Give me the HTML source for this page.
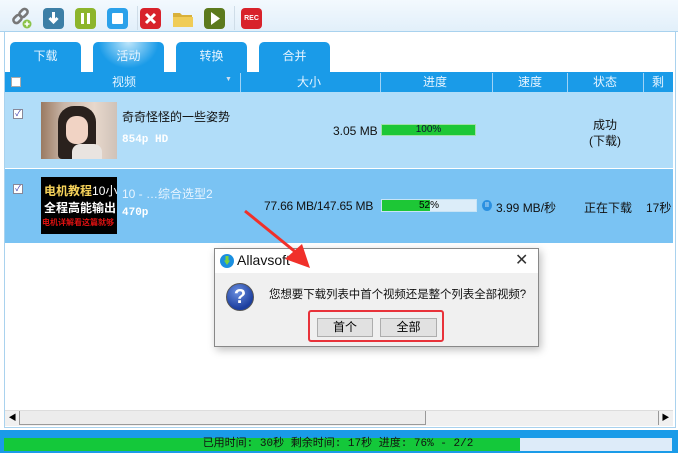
<!DOCTYPE html>
<html><head><meta charset="utf-8"><style>
*{margin:0;padding:0;box-sizing:border-box}
body{width:678px;height:453px;overflow:hidden;background:#fff;font-family:"Liberation Sans","Noto Sans CJK SC",sans-serif;position:relative}
.a{position:absolute;white-space:nowrap}
.ic{position:absolute;top:8px;width:21px;height:21px;border-radius:4px}
.tab{position:absolute;top:42px;height:31px;width:71px;background:#1a9be8;border-radius:5px 5px 0 0;color:#e6f4ff;font-size:12px;text-align:center;line-height:28px}
.hd{position:absolute;top:72px;height:20px;color:#e6f4ff;font-size:12px;line-height:20px;text-align:center}
.sep{position:absolute;top:73px;width:1px;height:19px;background:#9fd3f6}
.t{position:absolute;font-size:12px;color:#111;white-space:nowrap}
</style></head><body>
<div class="a" style="left:0;top:0;width:678px;height:32px;background:linear-gradient(#f3f9fe,#e1effa)"></div>
<div class="a" style="left:0;top:31px;width:678px;height:1px;background:#a9d2ee"></div>
<svg class="a" style="left:11px;top:7px" width="22" height="22" viewBox="0 0 22 22"><g fill="none" stroke="#777" stroke-width="2.6"><rect x="2" y="9" width="9" height="6" rx="3" transform="rotate(-45 6.5 12)"/><rect x="8" y="3" width="9" height="6" rx="3" transform="rotate(-45 12.5 6)"/></g><circle cx="16" cy="17" r="4.5" fill="#8bc34a"/><path d="M16 14.5v5M13.5 17h5" stroke="#fff" stroke-width="1.6"/></svg>
<div class="ic" style="left:43px;background:#3d7fa6"><svg width="21" height="21"><path d="M10.5 4v9M6.5 10l4 4 4-4" stroke="#fff" stroke-width="3" fill="none"/></svg></div>
<div class="ic" style="left:75px;background:#8db52c"><div class="a" style="left:6px;top:5px;width:3px;height:11px;background:#fff"></div><div class="a" style="left:12px;top:5px;width:3px;height:11px;background:#fff"></div></div>
<div class="ic" style="left:107px;background:#2ba1ea"><div class="a" style="left:5px;top:5px;width:11px;height:11px;background:#fff;border-radius:1px"></div></div>
<div class="a" style="left:137px;top:6px;width:1px;height:24px;background:#cfdde8"></div>
<div class="ic" style="left:140px;background:#d8222b"><svg width="21" height="21"><path d="M6 6l9 9M15 6l-9 9" stroke="#fff" stroke-width="3"/></svg></div>
<svg class="a" style="left:172px;top:10px" width="22" height="18"><path d="M1 3h7l2 2h10v12H1z" fill="#d9b13a"/><path d="M1 7h20v10H1z" fill="#f0cc56"/></svg>
<div class="ic" style="left:204px;background:#5c7a1e"><svg width="21" height="21"><path d="M7 4l9 6.5-9 6.5z" fill="#fff"/></svg></div>
<div class="a" style="left:234px;top:6px;width:1px;height:24px;background:#cfdde8"></div>
<div class="ic" style="left:241px;background:#d8222b;color:#fff;font-size:7px;line-height:21px;text-align:center;font-weight:bold">REC</div>
<div class="a" style="left:4px;top:32px;width:672px;height:396px;border:1px solid #a9d2ee;border-top:none"></div>
<div class="tab" style="left:10px">下载</div>
<div class="tab" style="left:93px;background:radial-gradient(ellipse at 50% 0,#bfe6fb 0,#1a9be8 60%)">活动</div>
<div class="tab" style="left:176px">转换</div>
<div class="tab" style="left:259px">合并</div>
<div class="a" style="left:5px;top:72px;width:668px;height:20px;background:#1a9be8"></div>
<div class="a" style="left:11px;top:77px;width:10px;height:10px;background:#fff;border:1px solid #aaa"></div>
<div class="hd" style="left:100px;width:48px">视频</div>
<div class="a" style="left:225px;top:76px;color:#cde;font-size:7px">▼</div>
<div class="sep" style="left:240px"></div>
<div class="hd" style="left:285px;width:48px">大小</div>
<div class="sep" style="left:380px"></div>
<div class="hd" style="left:411px;width:48px">进度</div>
<div class="sep" style="left:492px"></div>
<div class="hd" style="left:506px;width:48px">速度</div>
<div class="sep" style="left:567px"></div>
<div class="hd" style="left:581px;width:48px">状态</div>
<div class="sep" style="left:643px"></div>
<div class="hd" style="left:652px;width:20px;text-align:left;overflow:hidden">剩余</div>
<div class="a" style="left:5px;top:92px;width:668px;height:76px;background:#b1ddf9"></div>
<div class="a" style="left:13px;top:109px;width:10px;height:10px;background:#fff;border:1px solid #889;font-size:8px;line-height:8px;color:#33a;text-align:center">✓</div>
<div class="a" style="left:41px;top:102px;width:76px;height:57px;background:linear-gradient(90deg,#9a7a62,#c9b6a8 30%,#e8d8cc 70%,#cfc2b8)"></div>
<div class="a" style="left:58px;top:106px;width:38px;height:53px;border-radius:16px 16px 4px 4px;background:#2a211d"></div>
<div class="a" style="left:66px;top:116px;width:22px;height:28px;border-radius:10px;background:#f1d3c4"></div>
<div class="a" style="left:72px;top:144px;width:30px;height:15px;background:#e9e4e0;border-radius:8px 8px 0 0"></div>
<div class="t" style="left:122px;top:108px;font-size:12px">奇奇怪怪的一些姿势</div>
<div class="t" style="left:122px;top:134px;color:#fff;font-family:'Liberation Mono',monospace;font-weight:bold;font-size:11px">854p HD</div>
<div class="t" style="left:333px;top:124px;font-size:12px">3.05 MB</div>
<div class="a" style="left:381px;top:124px;width:95px;height:12px;background:#1dc736;border:1px solid #9fe0a8;font-size:10px;text-align:center;line-height:10px;color:#113">100%</div>
<div class="t" style="left:580px;top:117px;width:50px;text-align:center;font-size:12px;line-height:16px">成功<br>(下载)</div>
<div class="a" style="left:5px;top:169px;width:668px;height:74px;background:#7ac3f3"></div>
<div class="a" style="left:13px;top:184px;width:10px;height:10px;background:#fff;border:1px solid #889;font-size:8px;line-height:8px;color:#33a;text-align:center">✓</div>
<div class="a" style="left:41px;top:177px;width:76px;height:57px;background:#000;overflow:hidden;font-weight:bold;white-space:nowrap">
<div class="a" style="left:3px;top:5px;font-size:12px;color:#f7d35a">电机教程<span style="color:#fff;font-weight:normal">10小</span></div>
<div class="a" style="left:3px;top:22px;font-size:12px;color:#fff">全程高能输出</div>
<div class="a" style="left:1px;top:40px;font-size:8px;color:#d11">电机详解看这篇就够</div></div>
<div class="t" style="left:122px;top:185px;color:#e8f4ff;font-size:12px">10 - …综合选型2</div>
<div class="t" style="left:122px;top:207px;color:#fff;font-family:'Liberation Mono',monospace;font-weight:bold;font-size:11px">470p</div>
<div class="t" style="left:264px;top:199px;font-size:12px;letter-spacing:-0.2px">77.66 MB/147.65 MB</div>
<div class="a" style="left:381px;top:199px;width:96px;height:13px;background:#dcedf9;border:1px solid #c8e4f6"><div style="width:48px;height:11px;background:#1dc736"></div><div class="a" style="left:0;top:0;width:94px;text-align:center;font-size:10px;line-height:11px">52%</div></div>
<div class="a" style="left:482px;top:200px;width:10px;height:11px;border-radius:50%;background:#2b90e0;color:#fff;font-size:7px;line-height:11px;text-align:center">II</div>
<div class="t" style="left:496px;top:199px;font-size:12px">3.99 MB/秒</div>
<div class="t" style="left:584px;top:199px;font-size:12px">正在下载</div>
<div class="t" style="left:646px;top:199px;font-size:12px">17秒</div>
<div class="a" style="left:5px;top:410px;width:668px;height:16px;background:#f0f0f0;border-top:1px solid #ddd"></div>
<div class="a" style="left:6px;top:411px;width:14px;height:14px;border-right:1px solid #999;font-size:8px;line-height:14px;text-align:center">◀</div>
<div class="a" style="left:20px;top:411px;width:406px;height:14px;background:#ececec;border-right:1px solid #999;border-bottom:1px solid #999"></div>
<div class="a" style="left:658px;top:411px;width:14px;height:14px;border-left:1px solid #999;font-size:8px;line-height:14px;text-align:center">▶</div>
<div class="a" style="left:0;top:430px;width:678px;height:23px;background:#1a9be8"></div>
<div class="a" style="left:4px;top:438px;width:516px;height:13px;background:#14c83a"></div>
<div class="a" style="left:520px;top:438px;width:152px;height:13px;background:#ddebf9"></div>
<div class="a" style="left:4px;top:437px;width:668px;text-align:center;font-size:11px;font-family:'Liberation Mono','Noto Sans CJK SC',monospace;color:#111;line-height:14px">已用时间: 30秒 剩余时间: 17秒 进度: 76% - 2/2</div>
<div class="a" style="left:214px;top:248px;width:325px;height:99px;background:#f0f0f0;border:1px solid #888;box-shadow:2px 3px 8px rgba(0,0,0,.25)">
<div class="a" style="left:0;top:0;width:323px;height:24px;background:#fff"></div>
<div class="a" style="left:5px;top:5px;width:14px;height:14px;border-radius:50%;background:#1a8fe0"><div class="a" style="left:4px;top:2px;width:6px;height:9px;background:#7cd23c;clip-path:polygon(25% 0,75% 0,75% 50%,100% 50%,50% 100%,0 50%,25% 50%)"></div></div>
<div class="a" style="left:22px;top:3px;font-size:14px;color:#111">Allavsoft</div>
<div class="a" style="left:300px;top:1px;font-size:16px;color:#333">✕</div>
<div class="a" style="left:11px;top:34px;width:28px;height:28px;border-radius:50%;background:radial-gradient(circle at 40% 30%,#6a8fe0,#1d3f9f 70%);border:1px solid #555;color:#fff;font-weight:bold;font-size:20px;text-align:center;line-height:27px">?</div>
<div class="a" style="left:54px;top:37px;font-size:11.5px;color:#111;letter-spacing:-0.1px">您想要下载列表中首个视频还是整个列表全部视频?</div>
<div class="a" style="left:102px;top:69px;width:56px;height:19px;background:#e1e1e1;border:1px solid #adadad;font-size:12px;text-align:center;line-height:17px">首个</div>
<div class="a" style="left:165px;top:69px;width:57px;height:19px;background:#e1e1e1;border:1px solid #adadad;font-size:12px;text-align:center;line-height:17px">全部</div>
<div class="a" style="left:93px;top:61px;width:136px;height:32px;border:2px solid #e8323a;border-radius:3px"></div>
</div>
<svg class="a" style="left:240px;top:205px" width="80" height="70"><path d="M5 6L58 49" stroke="#f0302a" stroke-width="3"/><path d="M70 63L45 54 62 39z" fill="#f0302a"/></svg>
</body></html>
